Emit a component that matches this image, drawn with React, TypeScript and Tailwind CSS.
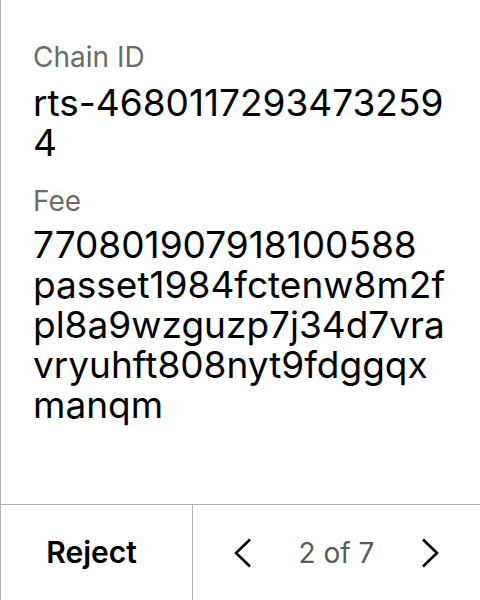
import React from "react";

function ChevronLeft() {
  return (
    <svg width="18" height="30" viewBox="0 0 18 30" fill="none">
      <path d="M16 1.5 L2 15 L16 28.5" stroke="#000" strokeWidth="2.6" strokeLinecap="butt" strokeLinejoin="miter" />
    </svg>
  );
}

function ChevronRight() {
  return (
    <svg width="18" height="30" viewBox="0 0 18 30" fill="none">
      <path d="M2 1.5 L16 15 L2 28.5" stroke="#000" strokeWidth="2.6" strokeLinecap="butt" strokeLinejoin="miter" />
    </svg>
  );
}

export default function App() {
  return (
    <div
      className="flex h-[600px] w-[480px] flex-col border-l border-[#b0b0b0] bg-white text-black"
      style={{ fontFamily: "Inter, 'Noto Sans', sans-serif" }}
    >
      <div className="flex-1 pl-[32px] pr-[26px] pt-[40px]">
        <div className="text-[28px] leading-[34px] text-[#6b6b6b]">Chain ID</div>
        <div className="mt-[9px] break-all text-[37px] leading-[40px]">rts-46801172934732594</div>
        <div className="mt-[21px] text-[28px] leading-[34px] text-[#6b6b6b]">Fee</div>
        <div className="mt-[7px] break-words text-[37px] leading-[40px]">
          770801907918100588 passet1984fctenw8m2fpl8a9wzguzp7j34d7vravryuhft808nyt9fdggqxmanqm
        </div>
      </div>
      <div className="flex h-[96px] border-t border-[#b0b0b0]">
        <div className="flex w-[192px] items-center justify-center border-r border-[#b0b0b0] pr-[10px] text-[30px] font-semibold">
          Reject
        </div>
        <div className="flex flex-1 items-center justify-between px-[41px]">
          <ChevronLeft />
          <span className="text-[28px] text-[#5a5a5a]">2 of 7</span>
          <ChevronRight />
        </div>
      </div>
    </div>
  );
}
